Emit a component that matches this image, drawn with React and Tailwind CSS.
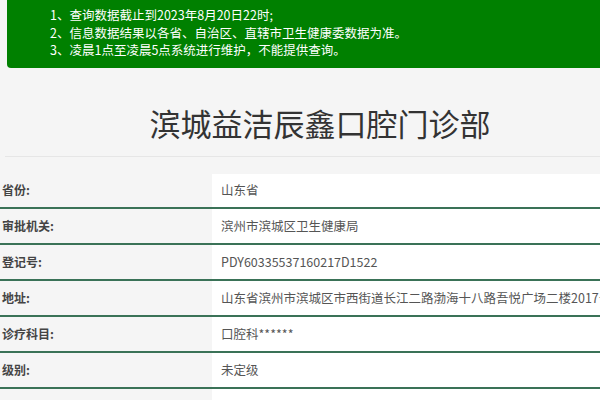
import React from 'react';

const notices = [
  '1、查询数据截止到2023年8月20日22时;',
  '2、信息数据结果以各省、自治区、直辖市卫生健康委数据为准。',
  '3、凌晨1点至凌晨5点系统进行维护，不能提供查询。',
];

const rows = [
  { label: '省份:', value: '山东省' },
  { label: '审批机关:', value: '滨州市滨城区卫生健康局' },
  { label: '登记号:', value: 'PDY60335537160217D1522' },
  { label: '地址:', value: '山东省滨州市滨城区市西街道长江二路渤海十八路吾悦广场二楼2017号' },
  { label: '诊疗科目:', value: '口腔科******' },
  { label: '级别:', value: '未定级' },
  { label: '', value: '' },
];

export default function App() {
  return (
    <div
      className="w-[600px] h-[400px] overflow-hidden bg-[#f5f5f5]"
      style={{ fontFamily: '"Noto Sans CJK SC", "Noto Sans", sans-serif' }}
    >
      <div className="w-[640px]">
        <div className="ml-[7px] h-[68px] bg-[#008000] rounded-bl-[4px] pl-[43px] pt-[6px] text-white text-[12.5px] leading-[17.5px]">
          {notices.map((n) => (
            <div key={n} className="whitespace-nowrap">{n}</div>
          ))}
        </div>

        <h1 className="mt-[35px] h-[40px] leading-[40px] text-center text-[31px] text-[#333] font-normal">
          滨城益洁辰鑫口腔门诊部
        </h1>
        <div className="mt-[13px] ml-[5px] border-t border-[#e6e6e6]" />

        <div className="mt-[16px]">
          {rows.map((r, i) => (
            <div key={i} className="flex h-[36px] border-b-2 border-[#3a7257]">
              <div className="w-[212px] shrink-0 pl-[2px] flex items-center text-[12px] font-bold text-[#444]">
                {r.label}
              </div>
              <div className={`flex-1 bg-white pl-[9px] flex items-center text-[12.5px] text-[#555] whitespace-nowrap ${i === 0 ? 'mt-px' : ''}`}>
                {r.value}
              </div>
            </div>
          ))}
        </div>
      </div>
    </div>
  );
}
